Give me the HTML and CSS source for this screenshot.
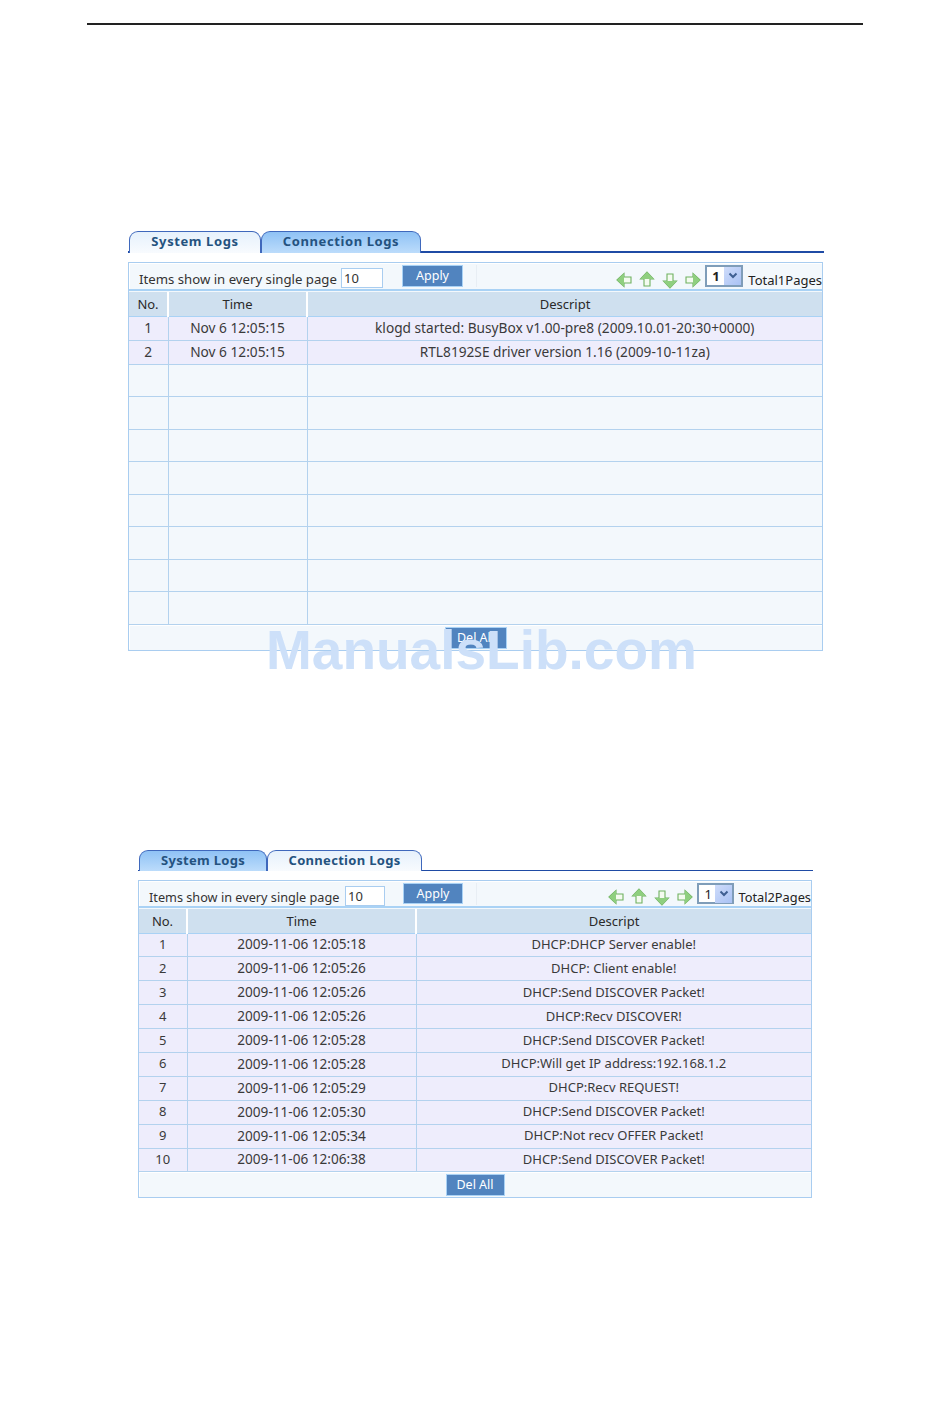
FILE: index.html
```html
<!DOCTYPE html>
<html lang="en">
<head>
<meta charset="utf-8">
<title>Logs</title>
<link rel="stylesheet" href="styles.css">
</head>
<body>
<hr class="rule">
<section class="panel panel-system">
  <div class="tabs">
    <div class="tab tab-active tab-a">System Logs</div>
    <div class="tab tab-idle tab-b">Connection Logs</div>
  </div>
  <div class="box">
    <div class="toolbar">
      <span class="label">Items show in every single page</span>
      <span class="input">10</span>
      <span class="btn btn-apply">Apply</span>
      <span class="sep"></span>
      <span class="pager">
        <svg class="arrow arrow-left" viewBox="0 0 16 16"><path class="af" d="M1 8 8 1.500V5H15V11H8V14.500Z"/><path class="ah" d="M1 8 8 1.500V14.500Z"/></svg>
        <svg class="arrow arrow-up" viewBox="0 0 16 16"><path class="af" d="M8 1 14.500 8H11V15H5V8H1.500Z"/><path class="ah" d="M8 1 14.500 8H1.500Z"/></svg>
        <svg class="arrow arrow-down" viewBox="0 0 16 16"><path class="af" d="M8 15 14.500 8H11V1H5V8H1.500Z"/><path class="ah" d="M8 15 14.500 8H1.500Z"/></svg>
        <svg class="arrow arrow-left" viewBox="0 0 16 16"><path class="af" d="M15 8 8 1.500V5H1V11H8V14.500Z"/><path class="ah" d="M15 8 8 1.500V14.500Z"/></svg>
        <span class="select"><b class="sel-num">1</b><span class="sel-btn"><svg viewBox="0 0 10 8"><path d="M1.500 1.500 5 5 8.500 1.500" /></svg></span></span>
        <span class="total">Total1Pages</span>
      </span>
    </div>
    <table class="grid">
      <colgroup><col class="c1"><col class="c2"><col></colgroup>
      <thead><tr><th>No.</th><th>Time</th><th>Descript</th></tr></thead>
      <tbody>
        <tr><td>1</td><td>Nov 6 12:05:15</td><td>klogd started: BusyBox v1.00-pre8 (2009.10.01-20:30+0000)</td></tr>
        <tr><td>2</td><td>Nov 6 12:05:15</td><td>RTL8192SE driver version 1.16 (2009-10-11za)</td></tr>
        <tr class="empty"><td></td><td></td><td></td></tr>
        <tr class="empty"><td></td><td></td><td></td></tr>
        <tr class="empty"><td></td><td></td><td></td></tr>
        <tr class="empty"><td></td><td></td><td></td></tr>
        <tr class="empty"><td></td><td></td><td></td></tr>
        <tr class="empty"><td></td><td></td><td></td></tr>
        <tr class="empty"><td></td><td></td><td></td></tr>
        <tr class="empty"><td></td><td></td><td></td></tr>
      </tbody>
    </table>
    <div class="foot"><span class="btn btn-del">Del All</span></div>
  </div>
</section>

<section class="panel panel-conn">
  <div class="tabs">
    <div class="tab tab-idle tab-a">System Logs</div>
    <div class="tab tab-active tab-b">Connection Logs</div>
  </div>
  <div class="box">
    <div class="toolbar">
      <span class="label">Items show in every single page</span>
      <span class="input">10</span>
      <span class="btn btn-apply">Apply</span>
      <span class="sep"></span>
      <span class="pager">
        <svg class="arrow arrow-left" viewBox="0 0 16 16"><path class="af" d="M1 8 8 1.500V5H15V11H8V14.500Z"/><path class="ah" d="M1 8 8 1.500V14.500Z"/></svg>
        <svg class="arrow arrow-up" viewBox="0 0 16 16"><path class="af" d="M8 1 14.500 8H11V15H5V8H1.500Z"/><path class="ah" d="M8 1 14.500 8H1.500Z"/></svg>
        <svg class="arrow arrow-down" viewBox="0 0 16 16"><path class="af" d="M8 15 14.500 8H11V1H5V8H1.500Z"/><path class="ah" d="M8 15 14.500 8H1.500Z"/></svg>
        <svg class="arrow arrow-left" viewBox="0 0 16 16"><path class="af" d="M15 8 8 1.500V5H1V11H8V14.500Z"/><path class="ah" d="M15 8 8 1.500V14.500Z"/></svg>
        <span class="select"><span class="sel-num">1</span><span class="sel-btn"><svg viewBox="0 0 10 8"><path d="M1.500 1.500 5 5 8.500 1.500" /></svg></span></span>
        <span class="total">Total2Pages</span>
      </span>
    </div>
    <table class="grid">
      <colgroup><col class="c1"><col class="c2"><col></colgroup>
      <thead><tr><th>No.</th><th>Time</th><th>Descript</th></tr></thead>
      <tbody>
        <tr><td>1</td><td class="time">2009-11-06 12:05:18</td><td>DHCP:DHCP Server enable!</td></tr>
        <tr><td>2</td><td class="time">2009-11-06 12:05:26</td><td>DHCP: Client enable!</td></tr>
        <tr><td>3</td><td class="time">2009-11-06 12:05:26</td><td>DHCP:Send DISCOVER Packet!</td></tr>
        <tr><td>4</td><td class="time">2009-11-06 12:05:26</td><td>DHCP:Recv DISCOVER!</td></tr>
        <tr><td>5</td><td class="time">2009-11-06 12:05:28</td><td>DHCP:Send DISCOVER Packet!</td></tr>
        <tr><td>6</td><td class="time">2009-11-06 12:05:28</td><td>DHCP:Will get IP address:192.168.1.2</td></tr>
        <tr><td>7</td><td class="time">2009-11-06 12:05:29</td><td>DHCP:Recv REQUEST!</td></tr>
        <tr><td>8</td><td class="time">2009-11-06 12:05:30</td><td>DHCP:Send DISCOVER Packet!</td></tr>
        <tr><td>9</td><td class="time">2009-11-06 12:05:34</td><td>DHCP:Not recv OFFER Packet!</td></tr>
        <tr><td>10</td><td class="time">2009-11-06 12:06:38</td><td>DHCP:Send DISCOVER Packet!</td></tr>
      </tbody>
    </table>
    <div class="foot"><span class="btn btn-del">Del All</span></div>
  </div>
</section>
<div class="watermark">ManualsLib.com</div>
</body>
</html>
```
FILE: styles.css
```css
* { box-sizing: border-box; }
html, body { margin: 0; padding: 0; background: #fff; }
body {
  position: relative;
  width: 950px;
  height: 1409px;
  overflow: hidden;
  font-family: "Noto Sans", "DejaVu Sans", sans-serif;
  font-size: 13px;
  color: #333;
}
.rule {
  margin: 23px 87px 0;
  height: 2px;
  border: 0;
  background: #222;
}
.panel-system { margin: 206px 0 0 128px; width: 696px; }
.panel-conn { margin: 199px 0 0 138px; width: 675px; }

.tabs {
  display: flex;
  align-items: flex-end;
  height: 22px;
  border-bottom: 2px solid #1f4ba5;
}
.panel-conn .tabs { border-bottom-width: 1px; height: 21px; }
.tab {
  height: 22px;
  margin-bottom: -2px;
  padding-bottom: 3px;
  border: 1px solid #3f68bc;
  border-bottom: 0;
  border-radius: 9px 9px 0 0;
  display: flex;
  align-items: center;
  justify-content: center;
  font-size: 13px;
  font-weight: 700;
  color: #24527f;
  letter-spacing: 0.6px;
}
.panel-conn .tab { height: 21px; margin-bottom: -1px; letter-spacing: 0.3px; }
.tab-active { background: linear-gradient(#e6f1fc, #f8fbfe); }
.tab-idle { background: linear-gradient(#8fc2f5, #bcdcfb); }
.panel-system .tab-a { width: 132px; margin-left: 1px; }
.panel-system .tab-b { width: 160px; }
.panel-conn .tab-a { width: 128px; margin-left: 1px; }
.panel-conn .tab-b { width: 155px; }

.box {
  border: 1px solid #a9cdf0;
  background: #f3f8fc;
}
.panel-system .box { margin-top: 9px; width: 695px; height: 389px; }
.panel-conn .box { margin-top: 9px; width: 674px; height: 318px; }

.toolbar {
  display: flex;
  align-items: center;
  height: 28px;
  padding-left: 10px;
  border-bottom: 2px solid #a9d2f5;
  box-shadow: inset 1px 1px 0 #fff;
}
.panel-conn .toolbar { height: 27px; }
.label { width: 202px; padding-top: 5px; font-size: 13.200px; white-space: nowrap; }
.panel-conn .label { width: 196px; padding-top: 7px; font-size: 12.700px; }
.input {
  width: 42px;
  height: 20px;
  margin-top: 4px;
  border: 1px solid #a9cdf0;
  background: #fff;
  padding-left: 2px;
  line-height: 19px;
}
.panel-conn .input { width: 40px; margin-top: 5px; }
.btn {
  display: inline-block;
  background: #5184bf;
  color: #fff;
  border: 1px solid #a9d2f5;
  text-align: center;
  font-size: 12.500px;
}
.btn-apply {
  width: 61px;
  height: 22px;
  line-height: 20px;
  margin-left: 19px;
}
.panel-conn .btn-apply { width: 60px; height: 21px; line-height: 19px; margin-left: 18px; }
.sep { width: 1px; height: 22px; margin-left: 13px; background: #e8eef4; }
.pager {
  margin-left: auto;
  align-self: stretch;
  display: flex;
  align-items: center;
  gap: 7px;
}
.arrow { width: 16px; height: 16px; }
.arrow-left { margin-top: 8px; }
.arrow-up { margin-top: 6px; }
.arrow-down { margin-top: 10px; }
.panel-conn .arrow-left { margin-top: 7px; }
.panel-conn .arrow-up { margin-top: 5px; }
.panel-conn .arrow-down { margin-top: 9px; }
.af { fill: #f4fbf0; stroke: #6fb160; stroke-width: 1.100; }
.ah { fill: #8fcf7f; }
.select {
  display: flex;
  width: 38px;
  height: 22px;
  margin-left: -3px;
  border: 2px solid #7f9db9;
  background: #fff;
  align-items: center;
}
.panel-conn .select { height: 21px; width: 37px; }
.sel-num { flex: 1; padding-left: 5px; color: #222; line-height: 18px; }
.sel-btn {
  width: 17px;
  height: 18px;
  background: linear-gradient(135deg, #cfdcfa, #a9c2f4);
  display: flex;
  align-items: center;
  justify-content: center;
}
.sel-btn svg { width: 10px; height: 8px; fill: none; stroke: #3f5f92; stroke-width: 2; }
.total { color: #222; margin: 8px 0 0 -2px; }
.panel-conn .total { margin: 7px 0 0 -3px; font-size: 12.800px; }

.grid {
  width: 100%;
  border-collapse: collapse;
  table-layout: fixed;
  margin-top: 1px;
}
.panel-system .c1 { width: 39px; }
.panel-system .c2 { width: 139px; }
.panel-conn .c1 { width: 48px; }
.panel-conn .c2 { width: 229px; }
.grid th {
  height: 24px;
  padding: 0;
  background: #cfe0ef;
  font-weight: 400;
  border-left: 2px solid #fff;
  border-bottom: 1px solid #a9d2f5;
  color: #2a2a2a;
}
.grid th:first-child { border-left: 0; }
.grid td {
  height: 24px;
  padding: 0 0 2px;
  background: #eeedfc;
  text-align: center;
  border-left: 1px solid #b3d2ee;
  border-bottom: 1px solid #b3d2ee;
  color: #3a3a3a;
  white-space: nowrap;
}
.grid td:first-child { border-left: 0; }
.panel-system .grid td { font-size: 13.700px; }
.panel-conn .grid td { height: 23.900px; }
.panel-conn .grid td.time { font-size: 13.600px; }
.grid .empty td { height: 32.500px; background: #f3f8fc; }
.foot { display: flex; justify-content: center; padding-top: 2px; box-shadow: inset 1px 1px 0 #fff; }
.btn-del { width: 62px; height: 22px; line-height: 20px; }
.panel-conn .btn-del { width: 59px; }

.watermark {
  position: absolute;
  left: 266px;
  top: 620px;
  font-family: "Liberation Sans", Arial, sans-serif;
  font-weight: 700;
  font-size: 55px;
  line-height: 60px;
  color: #cde0f9;
  white-space: nowrap;
}
```
